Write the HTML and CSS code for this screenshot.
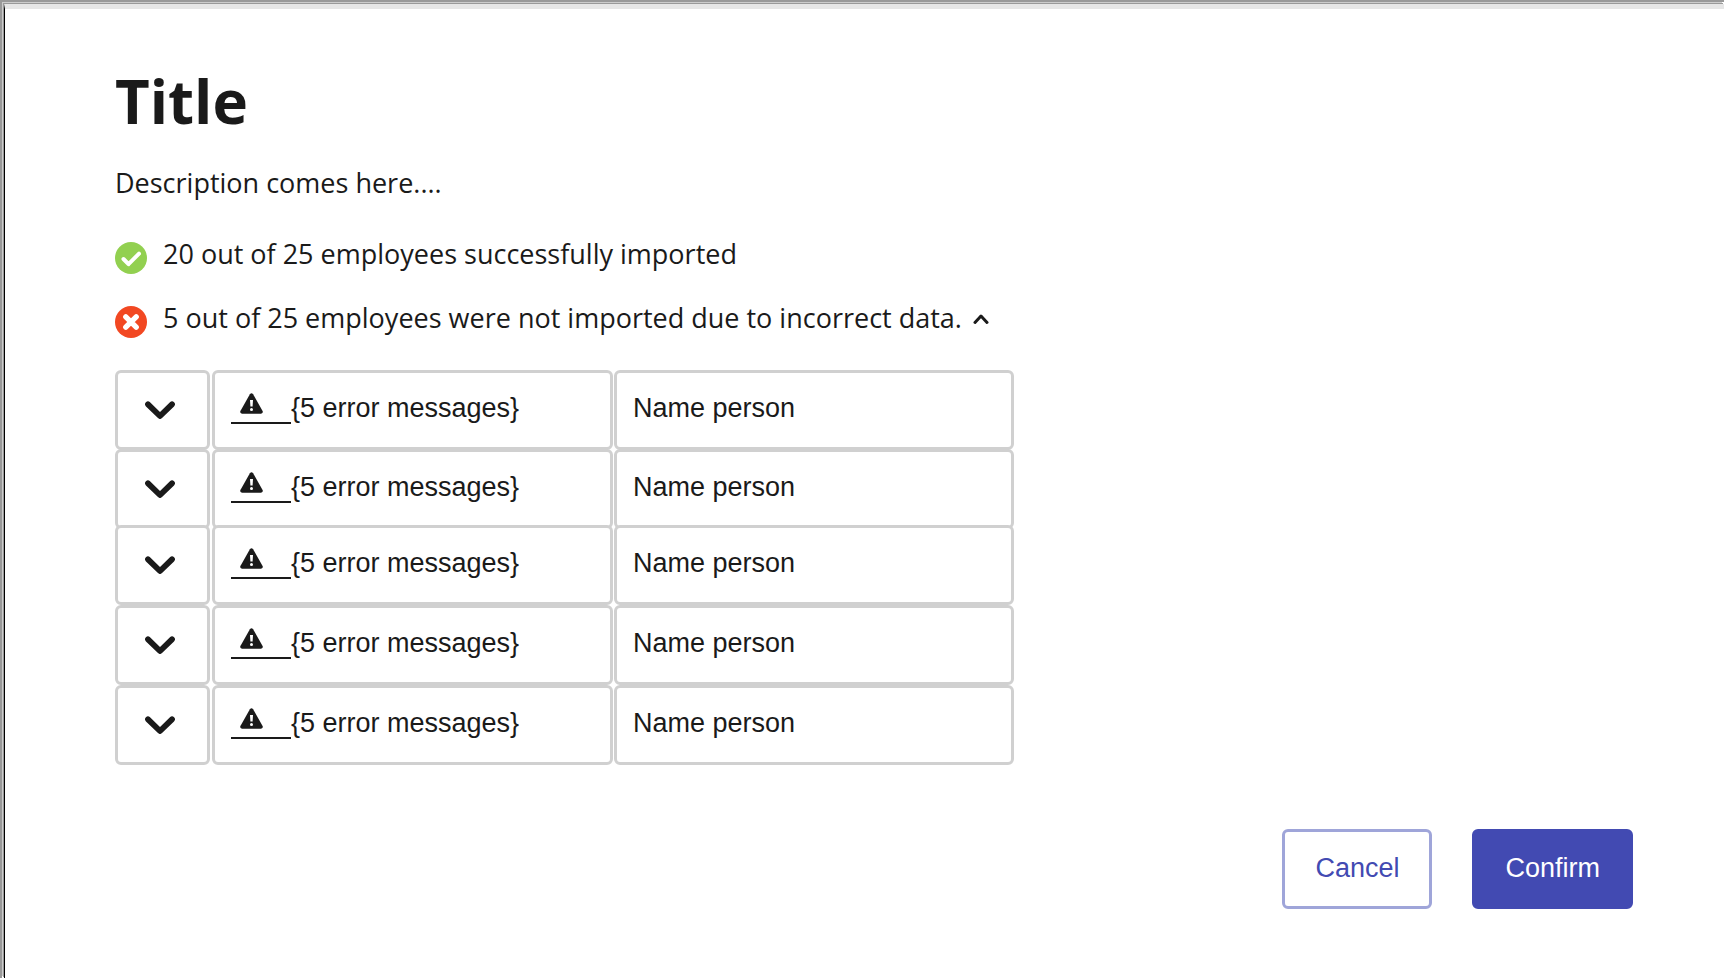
FILE: index.html
```
<!DOCTYPE html>
<html lang="en">
<head>
<meta charset="utf-8">
<title>Title</title>
<link rel="stylesheet" href="styles.css">
</head>
<body>
<svg class="sprite" aria-hidden="true">
  <symbol id="chevron" viewBox="0 0 30 18"><path d="M3 3.3 15 15 27 3.3" fill="none" stroke="currentColor" stroke-width="5.8" stroke-linecap="round" stroke-linejoin="round"/></symbol>
  <symbol id="warning" viewBox="0 0 23 21"><path d="M9.9 1.2Q11.5-.9 13.1 1.2L22.6 18Q23.4 20.5 21 20.7H2Q-.4 20.5.4 18Z" fill="currentColor"/><path d="M10 7h3l-.4 6.6h-2.2z" fill="#fff"/><circle cx="11.5" cy="16.6" r="1.5" fill="#fff"/></symbol>
</svg>
<main class="dialog">
  <h1 class="title">Title</h1>
  <p class="description">Description comes here....</p>
  <ul class="results">
    <li class="result">
      <svg class="status" viewBox="0 0 32 32" aria-hidden="true"><circle cx="16" cy="16" r="16" fill="#92d050"/><path d="M8.5 17 13.5 22.2 24 11.7" fill="none" stroke="#fff" stroke-width="4" stroke-linecap="round" stroke-linejoin="round"/></svg>
      <span>20 out of 25 employees successfully imported</span>
    </li>
    <li class="result">
      <svg class="status" viewBox="0 0 32 32" aria-hidden="true"><circle cx="16" cy="16" r="16" fill="#f24822"/><path d="m10.8 10.8 10.4 10.4M21.2 10.8 10.8 21.2" fill="none" stroke="#fff" stroke-width="5.4" stroke-linecap="round"/></svg>
      <span>5 out of 25 employees were not imported due to incorrect data.</span>
      <button class="collapse" type="button" aria-label="Collapse errors" aria-expanded="true"><svg class="collapse-icon" viewBox="0 0 16 12" aria-hidden="true"><path d="M2 9.5 8 3l6 6.5" fill="none" stroke="currentColor" stroke-width="3" stroke-linecap="round" stroke-linejoin="round"/></svg></button>
    </li>
  </ul>
  <table class="errors">
    <tbody>
      <tr class="row">
        <td class="cell"><button class="expand" type="button" aria-label="Expand row"><svg class="chevron"><use href="#chevron"/></svg></button></td>
        <td class="cell"><a class="flag" href="#" aria-label="Errors"><svg class="warning"><use href="#warning"/></svg></a>{5 error messages}</td>
        <td class="cell">Name person</td>
      </tr>
      <tr class="row">
        <td class="cell"><button class="expand" type="button" aria-label="Expand row"><svg class="chevron"><use href="#chevron"/></svg></button></td>
        <td class="cell"><a class="flag" href="#" aria-label="Errors"><svg class="warning"><use href="#warning"/></svg></a>{5 error messages}</td>
        <td class="cell">Name person</td>
      </tr>
      <tr class="row">
        <td class="cell"><button class="expand" type="button" aria-label="Expand row"><svg class="chevron"><use href="#chevron"/></svg></button></td>
        <td class="cell"><a class="flag" href="#" aria-label="Errors"><svg class="warning"><use href="#warning"/></svg></a>{5 error messages}</td>
        <td class="cell">Name person</td>
      </tr>
      <tr class="row">
        <td class="cell"><button class="expand" type="button" aria-label="Expand row"><svg class="chevron"><use href="#chevron"/></svg></button></td>
        <td class="cell"><a class="flag" href="#" aria-label="Errors"><svg class="warning"><use href="#warning"/></svg></a>{5 error messages}</td>
        <td class="cell">Name person</td>
      </tr>
      <tr class="row">
        <td class="cell"><button class="expand" type="button" aria-label="Expand row"><svg class="chevron"><use href="#chevron"/></svg></button></td>
        <td class="cell"><a class="flag" href="#" aria-label="Errors"><svg class="warning"><use href="#warning"/></svg></a>{5 error messages}</td>
        <td class="cell">Name person</td>
      </tr>
    </tbody>
  </table>
  <footer class="actions">
    <button class="button button-secondary" type="button">Cancel</button>
    <button class="button button-primary" type="button">Confirm</button>
  </footer>
</main>
</body>
</html>
```
FILE: styles.css
```
* { box-sizing: border-box; }

body {
  margin: 0;
  min-height: 100vh;
  display: flex;
  background: #fff;
  color: #1a1a1a;
  font: 27px/36px "Open Sans", sans-serif;
  border-top: 2px solid #999;
  border-left: 2px solid #999;
}

.sprite { display: none; }

.dialog {
  flex: 1;
  padding: 56px 91px 0 110px;
  border-left: 1px solid #000;
  border-top: 5px solid #e6e6e6;
  box-shadow: -1px -1px #999, -2px -2px #ccc;
  margin: 2px 0 0 2px;
}

.title { margin: 0; font-size: 60px; line-height: 72px; }
.description { margin: 28px 0 0; }

.results { list-style: none; margin: 35px 0 0; padding: 0; display: grid; gap: 26px; }
.result { display: flex; align-items: flex-start; }
.status { flex: none; width: 32px; height: 32px; margin: 6px 16px 0 0; }
.collapse { display: flex; padding: 0; margin: 13px 0 0 11px; border: 0; background: none; color: inherit; }
.collapse-icon { width: 16px; height: 12px; }

.errors {
  display: block;
  max-width: 900px;
  margin-top: 32px;
  font-family: "Liberation Sans", Arial, sans-serif;
}
.errors tbody { display: block; }
.row { display: grid; grid-template-columns: 96px 401px 400px; gap: 1px; }
.row:nth-child(2) { margin-top: -1px; }
.row:nth-child(3) { margin-top: -4px; }
.cell {
  display: flex;
  align-items: center;
  height: 80px;
  padding: 0 16px 4px;
  border: 3px solid #d0d0d0;
  border-radius: 6px;
  background: #fff;
}
.cell:first-child { margin-right: 1px; }
.expand { display: flex; padding: 4px 0 0 11px; border: 0; background: none; color: inherit; }
.chevron { width: 30px; height: 18px; }
.flag { display: flex; width: 60px; height: 31px; padding-left: 9px; border-bottom: 2px solid; color: inherit; }
.warning { width: 23px; height: 21px; }

.actions { display: flex; justify-content: flex-end; gap: 40px; margin-top: 64px; }
.button {
  height: 80px;
  padding: 0 30px 3px;
  border: 3px solid #9fa5d9;
  border-radius: 6px;
  background: #fff;
  color: #424ab2;
  font: 27px/36px "Liberation Sans", Arial, sans-serif;
}
.button-primary { border-color: #424ab2; background: #424ab2; color: #fff; }
```
